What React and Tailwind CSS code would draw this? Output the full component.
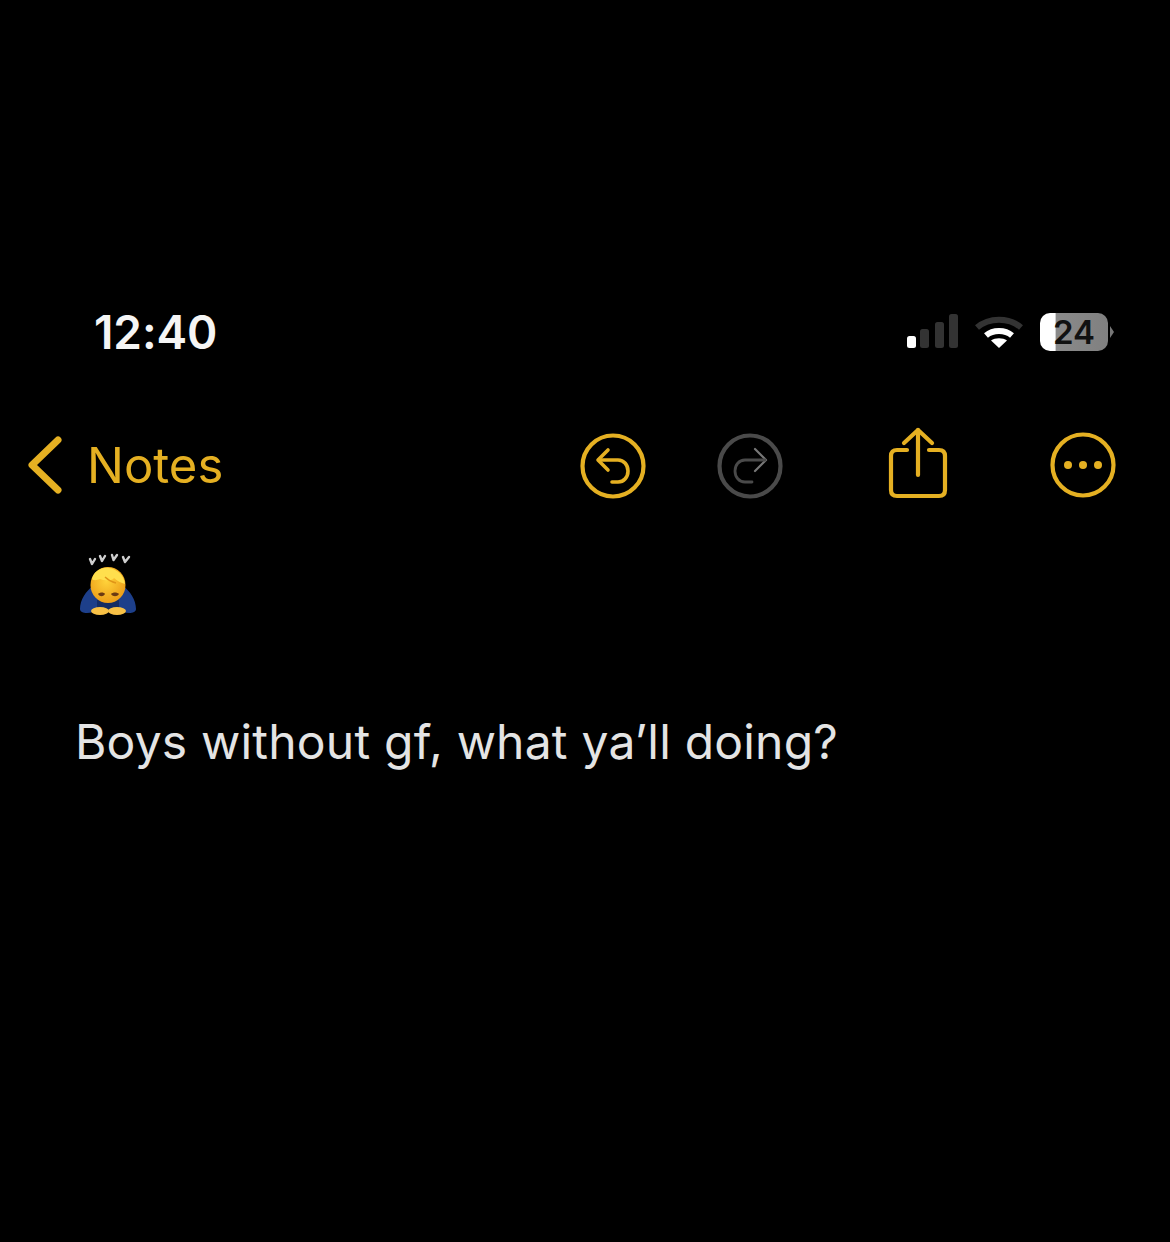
import React from 'react';

function SignalIcon() {
  return (
    <svg width="52" height="36" viewBox="0 0 52 36" fill="none">
      <rect x="1" y="22" width="9" height="12" rx="2.5" fill="#fff" />
      <rect x="14" y="15" width="9" height="19" rx="2.5" fill="#333" />
      <rect x="29" y="8" width="9" height="26" rx="2.5" fill="#333" />
      <rect x="43" y="0" width="9" height="34" rx="2.5" fill="#333" />
    </svg>
  );
}

function WifiIcon() {
  return (
    <svg width="50" height="36" viewBox="0 0 50 36" fill="none" strokeLinecap="butt">
      <path d="M3 13.5C15 3 35 3 47 13.5" stroke="#333" strokeWidth="6" />
      <path d="M12 21.5C19 15.5 31 15.5 38 21.5" stroke="#fff" strokeWidth="6" />
      <path d="M25 34L17 26.5C21 23.5 29 23.5 33 26.5Z" fill="#fff" />
    </svg>
  );
}

function Battery() {
  return (
    <div className="flex items-center gap-[2px]">
      <div className="w-[68px] h-[38px] rounded-[10px] overflow-hidden bg-[linear-gradient(to_right,#ffffff_0%,#ffffff_22%,#8a8a8a_24%,#808080_100%)] flex items-center justify-center">
        <span className="font-['Inter',sans-serif] font-semibold text-[33px] leading-none text-[#111]">24</span>
      </div>
      <svg width="4" height="12" viewBox="0 0 4 12" fill="#777">
        <path d="M0 0L4 6L0 12Z" />
      </svg>
    </div>
  );
}

function UndoIcon() {
  return (
    <svg width="66" height="66" viewBox="0 0 66 66" fill="none" stroke="#e5b022" strokeWidth="4.2" strokeLinecap="round" strokeLinejoin="round">
      <circle cx="33" cy="33" r="30.5" />
      <path d="M28 17L18 27L28 37" strokeWidth="3.6" />
      <path d="M19 27H38C44 27 48 32 48 38C48 44 44 49 38 49H32" strokeWidth="3.6" />
    </svg>
  );
}

function RedoIcon() {
  return (
    <svg width="66" height="66" viewBox="0 0 66 66" fill="none" stroke="#4a4a4a" strokeWidth="4.2" strokeLinecap="round" strokeLinejoin="round">
      <circle cx="33" cy="33" r="30.5" />
      <path d="M38 16L49 27L38 38" strokeWidth="2.2" stroke="#777" />
      <path d="M48 27H28C22 27 18 32 18 38C18 44 22 49 28 49H35" strokeWidth="2.8" />
    </svg>
  );
}

function ShareIcon() {
  return (
    <svg width="60" height="74" viewBox="0 0 60 74" fill="none" stroke="#e5b022" strokeWidth="4.2" strokeLinecap="round" strokeLinejoin="round">
      <path d="M19 23H9C5 23 3 25 3 29V63C3 67 5 69 9 69H51C55 69 57 67 57 63V29C57 25 55 23 51 23H41" />
      <path d="M30 48V3" />
      <path d="M16 16L30 3L44 16" />
    </svg>
  );
}

function MoreIcon() {
  return (
    <svg width="66" height="66" viewBox="0 0 66 66" fill="none">
      <circle cx="33" cy="33" r="30.5" stroke="#e5b022" strokeWidth="4.2" />
      <circle cx="18" cy="33" r="4" fill="#e5b022" />
      <circle cx="33" cy="33" r="4" fill="#e5b022" />
      <circle cx="48" cy="33" r="4" fill="#e5b022" />
    </svg>
  );
}

function BowEmoji() {
  return (
    <svg width="58" height="68" viewBox="0 0 58 68" fill="none">
      <defs>
        <radialGradient id="head" cx="45%" cy="40%" r="65%">
          <stop offset="0%" stopColor="#ffd23a" />
          <stop offset="100%" stopColor="#eb9a16" />
        </radialGradient>
      </defs>
      <g stroke="#cfcfcf" strokeWidth="2.4" strokeLinecap="round">
        <path d="M11 9L13 14M16 9L13 14" />
        <path d="M21 6L23 11M26 6L23 11" />
        <path d="M33 5L34.500 10M38 5L34.500 10" />
        <path d="M44 7L46 12M50 7L46 12" />
      </g>
      <path d="M14 36C7 41 1 50 1 59C1 63 8 64 14 62L44 62C50 64 57 63 57 59C57 50 51 41 44 36Z" fill="#1d3f8a" />
      <path d="M18 50H40V62H18Z" fill="#142c63" />
      <ellipse cx="29" cy="35" rx="17.500" ry="18" fill="url(#head)" />
      <path d="M13 29C15 21 22 17 30 18C38 19 45 25 46 34C42 33 38 31 35 28C34 31 25 31 21 29C18 30 15 31 13 29Z" fill="#ffdf4d" />
      <path d="M26 27C29 30 33 32 37 33" stroke="#e09518" strokeWidth="1.3" />
      <path d="M19 44C21 42 25 42 26 44C24 47 21 47 19 44Z" fill="#6b3a13" />
      <path d="M32 44C34 42 38 42 40 44C38 47 34 47 32 44Z" fill="#6b3a13" />
      <ellipse cx="21" cy="61" rx="9" ry="4" fill="#f8c146" />
      <ellipse cx="38" cy="61" rx="9" ry="4" fill="#f8c146" />
    </svg>
  );
}

export default function App() {
  return (
    <div className="w-[1170px] h-[1242px] bg-black overflow-hidden font-['Inter',sans-serif]">
      {/* status bar */}
      <div className="pt-[306px] pl-[94px] pr-[56px] flex items-center justify-between h-[358px]">
        <span className="font-semibold text-[46px] leading-[52px] text-[#f5f5f5] tracking-[-0.1px]">12:40</span>
        <div className="flex items-center">
          <SignalIcon />
          <div className="ml-[16px] mr-[16px]"><WifiIcon /></div>
          <Battery />
        </div>
      </div>

      {/* nav */}
      <div className="mt-[66px] h-[82px] pl-[28px] pr-[54px] flex items-center">
        <svg width="34" height="58" viewBox="0 0 34 58" fill="none" stroke="#e5b022" strokeWidth="7" strokeLinecap="round" strokeLinejoin="round">
          <path d="M30 4L4 29L30 54" />
        </svg>
        <span className="ml-[25px] text-[49px] leading-none text-[#e5b022]">Notes</span>
        <div className="ml-auto flex items-center">
          <div className="mt-[2px]"><UndoIcon /></div>
          <div className="ml-[71px] mt-[2px]"><RedoIcon /></div>
          <div className="ml-[105px] -mt-[3px]"><ShareIcon /></div>
          <div className="ml-[102px]"><MoreIcon /></div>
        </div>
      </div>

      {/* note body */}
      <div className="pl-[79px] mt-[44px]">
        <BowEmoji />
        <p className="mt-[96px] -ml-[4px] text-[48px] tracking-[0.2px] leading-[56px] text-[#e4e4e4]">Boys without gf, what ya’ll doing?</p>
      </div>
    </div>
  );
}
